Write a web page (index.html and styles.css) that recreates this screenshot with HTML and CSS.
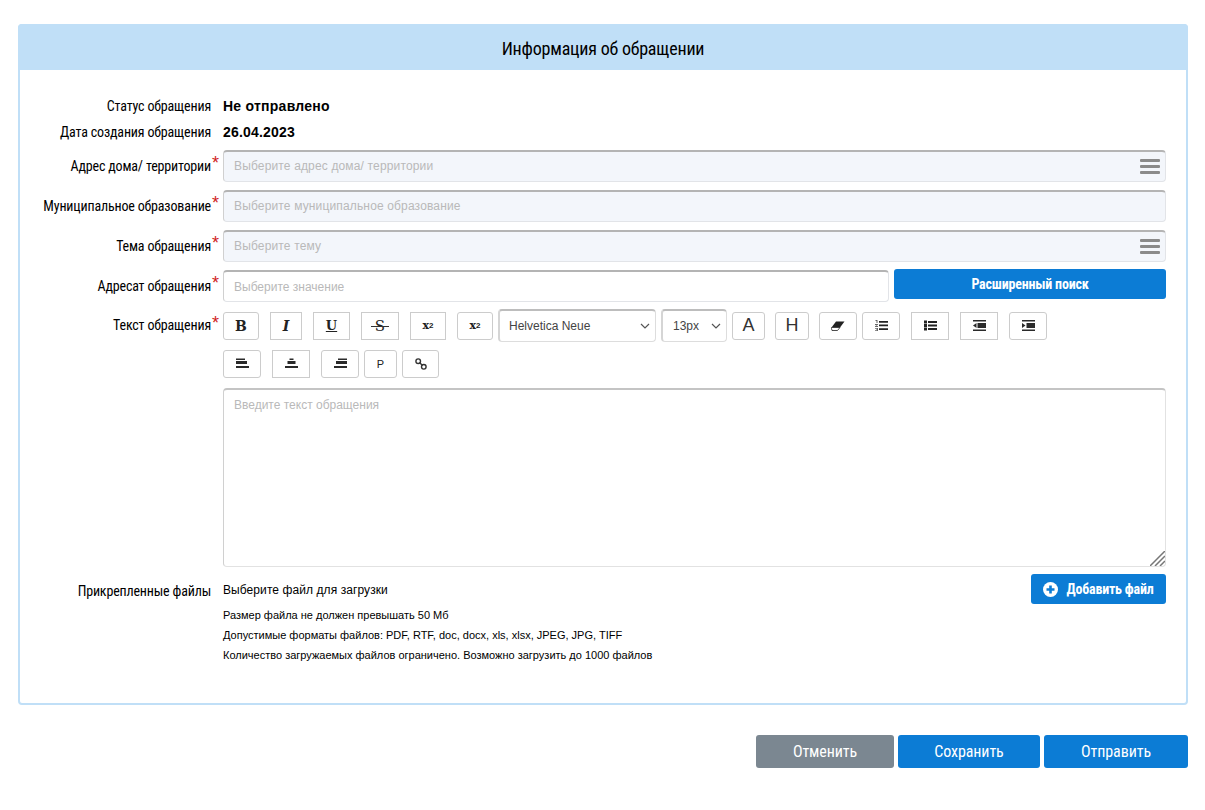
FILE: index.html

```html
<!DOCTYPE html>
<html lang="ru">
<head>
  <meta charset="UTF-8">
  <title>Информация об обращении</title>
  <link rel="stylesheet" href="styles.css">
</head>
<body>
  <div class="card">
    <h1 class="card-title">Информация об обращении</h1>
    <div class="card-body">
      <div class="row row-status">
        <label class="label">Статус обращения</label>
        <div class="value value-status">Не отправлено</div>
      </div>
      <div class="row row-date">
        <label class="label">Дата создания обращения</label>
        <div class="value value-date">26.04.2023</div>
      </div>
      <div class="row">
        <label class="label required">Адрес дома/ территории</label>
        <div class="field">
          <input class="input input-locked" type="text" placeholder="Выберите адрес дома/ территории">
          <span class="burger"><i></i><i></i><i></i></span>
        </div>
      </div>
      <div class="row">
        <label class="label required">Муниципальное образование</label>
        <div class="field">
          <input class="input input-locked" type="text" placeholder="Выберите муниципальное образование">
        </div>
      </div>
      <div class="row">
        <label class="label required">Тема обращения</label>
        <div class="field">
          <input class="input input-locked" type="text" placeholder="Выберите тему">
          <span class="burger"><i></i><i></i><i></i></span>
        </div>
      </div>
      <div class="row">
        <label class="label required">Адресат обращения</label>
        <div class="field field-short">
          <input class="input" type="text" placeholder="Выберите значение">
        </div>
        <button class="btn btn-search">Расширенный поиск</button>
      </div>
      <div class="row row-editor">
        <label class="label required">Текст обращения</label>
        <div class="editor">
          <div class="toolbar">
            <button class="tool w36 serif bold">B</button>
            <button class="tool w32 square serif italic">I</button>
            <button class="tool w37 square serif under">U</button>
            <button class="tool w38 square serif strike"><span class="strike-s">S</span></button>
            <button class="tool w36 square serif small">x<sub>2</sub></button>
            <button class="tool w36 serif small">x<sup>2</sup></button>
            <select class="select select-font tight">
              <option>Helvetica Neue</option>
            </select>
            <select class="select select-size tight">
              <option>13px</option>
            </select>
            <button class="tool w33 big tight">A</button>
            <button class="tool w34 big near">H</button>
            <button class="tool w38 near">
              <svg width="14" height="10" viewBox="0 0 14 10"><path d="M5 0.500H13.500L9 6.500H0.500z" fill="#222"/><path d="M0.500 6.500H9L6.500 9.500H1L0.500 7.500z" fill="#fff" stroke="#222" stroke-width="0.800"/></svg>
            </button>
            <button class="tool w38 tight">
              <svg width="13" height="11" viewBox="0 0 13 11"><path d="M4 1h9v1.700H4zM4 4.600h9v1.700H4zM4 8.200h9v1.700H4z" fill="#222"/><path d="M0.500 0h2v3h-1V1h-1zM0 4h3v0.800L1.200 6H3v1H0v-0.800L1.800 5H0zM0 8h3v3H0v-0.800h2V9.800H1V9.200h1V8.800H0z" fill="#666"/></svg>
            </button>
            <button class="tool w38 square">
              <svg width="13" height="11" viewBox="0 0 13 11"><path d="M4 1h9v2H4zM4 4.500h9v2H4zM4 8h9v2H4z" fill="#222"/><path d="M0 0.500h3v3H0zM0 4h3v3H0zM0 7.500h3v3H0z" fill="#222"/></svg>
            </button>
            <button class="tool w38 square">
              <svg width="13" height="11" viewBox="0 0 13 11"><path d="M0 0h13v1.500H0zM4.500 3h8.500v5H4.500zM0 9.500h13V11H0z" fill="#2a2a2a"/><path d="M3.500 3v5L0 5.500z" fill="#2a2a2a"/></svg>
            </button>
            <button class="tool w38">
              <svg width="13" height="11" viewBox="0 0 13 11"><path d="M0 0h13v1.500H0zM4.500 3h8.500v5H4.500zM0 9.500h13V11H0z" fill="#2a2a2a"/><path d="M0 3v5l3.500-2.500z" fill="#2a2a2a"/></svg>
            </button>
          </div>
          <div class="toolbar toolbar-second">
            <button class="tool w38">
              <svg width="13" height="11" viewBox="0 0 13 11"><path d="M0 0.500h9v1.500H0zM0 3h11v3H0zM0 8h13v2H0z" fill="#2a2a2a"/></svg>
            </button>
            <button class="tool w38 square">
              <svg width="13" height="11" viewBox="0 0 13 11"><path d="M4.500 0.500h4v1.500h-4zM2.500 3h8v3h-8zM0 8h13v2H0z" fill="#2a2a2a"/></svg>
            </button>
            <button class="tool w38">
              <svg width="13" height="11" viewBox="0 0 13 11"><path d="M4 0.500h9v1.500H4zM2 3h11v3H2zM0 8h13v2H0z" fill="#2a2a2a"/></svg>
            </button>
            <button class="tool w33 tight para">P</button>
            <button class="tool w37 tight">
              <svg width="12" height="12" viewBox="0 0 12 12"><circle cx="3.200" cy="3.200" r="2.300" fill="none" stroke="#333" stroke-width="1.400"/><circle cx="8.800" cy="8.800" r="2.300" fill="none" stroke="#333" stroke-width="1.400"/><path d="M4.500 4.500 7.500 7.500" stroke="#333" stroke-width="1.400"/></svg>
            </button>
          </div>
          <div class="text-wrap">
            <textarea class="text-area" placeholder="Введите текст обращения"></textarea>
            <svg class="grip" width="15" height="15" viewBox="0 0 15 15"><path d="M0 15 15 0M5 15 15 5M10 15 15 10" stroke="#777" stroke-width="1.500"/></svg>
          </div>
        </div>
      </div>
      <div class="row row-files">
        <label class="label">Прикрепленные файлы</label>
        <div class="files">
          <div class="files-head">
            <span class="files-title">Выберите файл для загрузки</span>
            <button class="btn btn-add">
              <svg width="15" height="15" viewBox="0 0 15 15"><circle cx="7.500" cy="7.500" r="7.500" fill="#fff"/><path d="M6.200 3.500h2.600v2.700h2.700v2.600H8.800v2.700H6.200V8.800H3.500V6.200h2.700z" fill="#0c7cd5"/></svg>
              Добавить файл
            </button>
          </div>
          <p class="note">Размер файла не должен превышать 50 Мб</p>
          <p class="note">Допустимые форматы файлов: PDF, RTF, doc, docx, xls, xlsx, JPEG, JPG, TIFF</p>
          <p class="note">Количество загружаемых файлов ограничено. Возможно загрузить до 1000 файлов</p>
        </div>
      </div>
    </div>
  </div>
  <div class="actions">
    <button class="btn btn-action btn-cancel">Отменить</button>
    <button class="btn btn-action btn-save">Сохранить</button>
    <button class="btn btn-action btn-send">Отправить</button>
  </div>
</body>
</html>
```

FILE: styles.css

```css
* {
  box-sizing: border-box;
}
body {
  margin: 0;
  padding: 24px 17px 0 18px;
  background: #fff;
  color: #000;
  font-family: "Liberation Sans", Arial, sans-serif;
  font-size: 12px;
}
.card {
  height: 681px;
  border: 2px solid #c0dff7;
  border-radius: 4px;
}
.card-title {
  margin: -2px -2px 0;
  height: 46px;
  background: #c0dff7;
  border-radius: 4px 4px 0 0;
  font-family: "Roboto Condensed", "Liberation Sans Narrow", "Liberation Sans", sans-serif;
  font-size: 18px;
  font-weight: normal;
  letter-spacing: -0.2px;
  line-height: 49px;
  text-align: center;
}
.card-body {
  padding: 24px 20px 0 0;
}
.row {
  display: flex;
  margin-bottom: 8px;
}
.row-status {
  height: 24px;
  margin-bottom: 2px;
  align-items: center;
}
.row-date {
  height: 24px;
  margin-bottom: 6px;
  align-items: center;
}
.label {
  flex: none;
  width: 191px;
  margin-right: 12px;
  position: relative;
  font-family: "Roboto Condensed", "Liberation Sans Narrow", "Liberation Sans", sans-serif;
  font-size: 14px;
  letter-spacing: -0.17px;
  line-height: 32px;
  text-align: right;
}
.row-status .label, .row-date .label {
  line-height: 24px;
}
.required::after {
  content: "*";
  position: absolute;
  left: 100%;
  top: 1px;
  margin-left: 1px;
  color: #d01c1c;
  font-family: "Liberation Sans", sans-serif;
  font-size: 18px;
  line-height: 24px;
}
.value {
  font-weight: bold;
}
.value-status {
  font-size: 14px;
  letter-spacing: 0.25px;
}
.value-date {
  font-size: 14px;
  letter-spacing: 0.2px;
}
.field {
  flex: 1;
  position: relative;
  height: 32px;
}
.field-short {
  flex: none;
  width: 666px;
}
.input {
  width: 100%;
  height: 100%;
  padding: 0 10px;
  border: 1px solid #e2e4e8;
  border-top: 2px solid #b4b4b4;
  border-left-color: #d0d0d0;
  border-radius: 4px;
  outline: none;
  background: #fff;
  font-family: "Liberation Sans", sans-serif;
  font-size: 12px;
}
.input::placeholder, .text-area::placeholder {
  color: #b9b9b9;
  opacity: 1;
}
.input-locked {
  padding-bottom: 2px;
  background: #f3f6fb;
  letter-spacing: 0.15px;
}
.burger {
  position: absolute;
  right: 6px;
  top: 9px;
  width: 20px;
}
.burger i {
  display: block;
  height: 3px;
  margin-bottom: 3px;
  border-radius: 1px;
  background: #8a8a8a;
}
.btn {
  border: none;
  border-radius: 3px;
  background: #0c7cd5;
  color: #fff;
  font-family: "Roboto Condensed", "Liberation Sans Narrow", "Liberation Sans", sans-serif;
  font-size: 14px;
  font-weight: bold;
  letter-spacing: -0.2px;
}
.btn-search {
  flex: none;
  width: 272px;
  height: 30px;
  margin: -1px 0 0 5px;
}
.row-editor {
  margin-top: 9px;
  margin-bottom: 7px;
}
.row-editor .label {
  line-height: 28px;
}
.row-editor .required::after {
  top: 0;
}
.editor {
  flex: 1;
}
.toolbar {
  display: flex;
  align-items: center;
  gap: 11px;
  height: 29px;
}
.toolbar-second {
  margin-top: 9px;
}
.tool {
  height: 28px;
  padding: 0;
  display: flex;
  align-items: center;
  justify-content: center;
  border: 1px solid #ccc;
  border-radius: 3px;
  background: #fff;
  color: #222;
}
.square {
  border-radius: 0;
}
.w32 { width: 32px; }
.w33 { width: 33px; }
.w34 { width: 34px; }
.w36 { width: 36px; }
.w37 { width: 37px; }
.w38 { width: 38px; }
.tight {
  margin-left: -6px;
}
.near {
  margin-left: -1px;
}
.serif {
  font-family: "DejaVu Serif", "Liberation Serif", serif;
  font-weight: bold;
  font-size: 14px;
}
.italic {
  font-style: italic;
}
.under {
  font-size: 13px;
  text-decoration: underline;
}
.strike {
  font-weight: normal;
  font-size: 15px;
}
.strike-s {
  position: relative;
  padding: 0 2px;
}
.strike-s::after {
  content: "";
  position: absolute;
  left: -2px;
  right: -2px;
  top: 9px;
  height: 1px;
  background: #333;
}
.small {
  font-size: 11px;
}
.small sub, .small sup {
  font-size: 8px;
  font-family: "Liberation Sans", sans-serif;
  line-height: 0;
}
.small sub {
  vertical-align: -3px;
}
.small sup {
  vertical-align: 4px;
}
.big {
  font-family: "Liberation Sans", sans-serif;
  font-size: 18px;
  color: #333;
}
.para {
  font-family: "Liberation Sans", sans-serif;
  font-size: 11px;
}
.select {
  appearance: none;
  height: 33px;
  padding: 0 4px 0 5px;
  border: 1px solid #ddd;
  border-top: 2px solid #bdbdbd;
  border-left: 2px solid #d5d5d5;
  border-radius: 4px;
  background: #fff url("data:image/svg+xml,%3Csvg xmlns='http://www.w3.org/2000/svg' width='10' height='6'%3E%3Cpath d='M1 1l4 4 4-4' fill='none' stroke='%23555' stroke-width='1.200'/%3E%3C/svg%3E") no-repeat right 5px center;
  color: #444;
  font-family: "Liberation Sans", sans-serif;
  font-size: 12px;
  outline: none;
}
.select-font {
  width: 158px;
  padding-left: 9px;
}
.select-size {
  width: 66px;
  padding-left: 10px;
}
.text-wrap {
  position: relative;
  margin-top: 10px;
}
.text-area {
  display: block;
  width: 100%;
  height: 179px;
  padding: 8px 10px;
  border: 1px solid #e2e2e2;
  border-top: 2px solid #c4c4c4;
  border-left-color: #d0d0d0;
  border-radius: 4px;
  outline: none;
  resize: none;
  font-family: "Liberation Sans", sans-serif;
  font-size: 12px;
}
.grip {
  position: absolute;
  right: 1px;
  bottom: 1px;
}
.row-files .label {
  line-height: 35px;
}
.files {
  flex: 1;
}
.files-head {
  display: flex;
  justify-content: space-between;
  align-items: center;
  height: 30px;
  margin-bottom: 1px;
}
.files-title {
  padding-top: 2px;
  letter-spacing: 0.08px;
}
.btn-add {
  display: flex;
  align-items: center;
  justify-content: center;
  gap: 8px;
  width: 135px;
  height: 30px;
}
.note {
  margin: 0;
  font-size: 11px;
  line-height: 20px;
}
.actions {
  display: flex;
  justify-content: flex-end;
  gap: 4px;
  margin-top: 30px;
}
.btn-action {
  height: 33px;
  font-size: 16px;
  font-weight: normal;
  letter-spacing: -0.1px;
}
.btn-cancel {
  width: 138px;
  background: #7b8791;
}
.btn-save {
  width: 142px;
}
.btn-send {
  width: 144px;
}
```
